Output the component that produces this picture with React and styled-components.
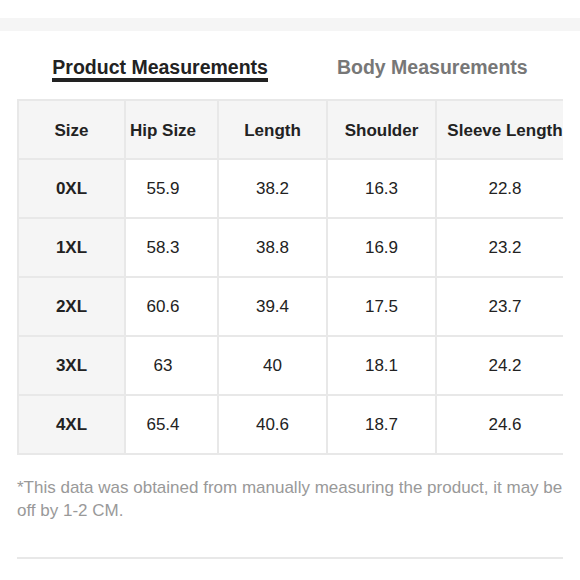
import React from 'react';
import styled, { createGlobalStyle } from 'styled-components';

const rows = [
  ['0XL', '55.9', '38.2', '16.3', '22.8'],
  ['1XL', '58.3', '38.8', '16.9', '23.2'],
  ['2XL', '60.6', '39.4', '17.5', '23.7'],
  ['3XL', '63', '40', '18.1', '24.2'],
  ['4XL', '65.4', '40.6', '18.7', '24.6'],
];

const columns = [
  { label: 'Size', width: 107 },
  { label: 'Hip Size', width: 93 },
  { label: 'Length', width: 109 },
  { label: 'Shoulder', width: 109 },
  { label: 'Sleeve Length', width: 138 },
];

function App() {
  return (
    <Page>
      <GlobalStyle />
      <Band />
      <Section>
        <Tabs>
          <Tab active>Product Measurements</Tab>
          <Tab>Body Measurements</Tab>
        </Tabs>
        <TableWrap>
          <Table>
            <colgroup>
              {columns.map((c) => (
                <col key={c.label} style={{ width: c.width }} />
              ))}
            </colgroup>
            <thead>
              <tr>
                {columns.map((c) => (
                  <Th key={c.label}>{c.label}</Th>
                ))}
              </tr>
            </thead>
            <tbody>
              {rows.map((r) => (
                <tr key={r[0]}>
                  <SizeCell>{r[0]}</SizeCell>
                  {r.slice(1).map((v, i) => (
                    <Td key={i}>{v}</Td>
                  ))}
                </tr>
              ))}
            </tbody>
          </Table>
        </TableWrap>
        <Note>
          *This data was obtained from manually measuring the product, it may be off by 1-2 CM.
        </Note>
        <Divider />
      </Section>
    </Page>
  );
}

//////// style ////////

const GlobalStyle = createGlobalStyle`
  body {
    margin: 0;
    background: #fff;
    font-family: "Liberation Sans", Arial, sans-serif;
    color: #222;
  }
`;

const Page = styled.div`
  width: 580px;
  padding-top: 18px;
`;

const Band = styled.div`
  height: 13px;
  background-color: #f5f5f5;
`;

const Section = styled.div`
  padding: 25px 17px 0 17px;
`;

const Tabs = styled.div`
  display: flex;
  justify-content: center;
  gap: 69px;
`;

const Tab = styled.div`
  font-size: 19.5px;
  font-weight: bold;
  line-height: 22px;
  color: ${(p) => (p.active ? '#222' : '#777')};
  border-bottom: 4px solid ${(p) => (p.active ? '#222' : 'transparent')};
`;

const TableWrap = styled.div`
  margin-top: 17px;
  overflow: hidden;
`;

const Table = styled.table`
  border-collapse: collapse;
  table-layout: fixed;
  width: 556px;
  tr {
    height: 59px;
  }
  th:nth-child(2),
  td:nth-child(2) {
    padding-right: 17px;
  }
`;

const Th = styled.th`
  border: 2px solid #e8e8e8;
  background-color: #f5f5f5;
  font-size: 17px;
  font-weight: bold;
  color: #222;
  text-align: center;
  white-space: nowrap;
  padding: 3px 0 0 0;
`;

const Td = styled.td`
  border: 2px solid #e8e8e8;
  font-size: 17px;
  color: #222;
  text-align: center;
  padding: 1px 0 0 0;
`;

const SizeCell = styled(Td)`
  background-color: #f5f5f5;
  font-weight: bold;
`;

const Note = styled.p`
  margin: 21px 0 0 0;
  font-size: 17px;
  line-height: 23px;
  color: #999;
`;

const Divider = styled.hr`
  margin: 35px 0 0 0;
  border: none;
  height: 2px;
  background-color: #e8e8e8;
`;

export default App;
